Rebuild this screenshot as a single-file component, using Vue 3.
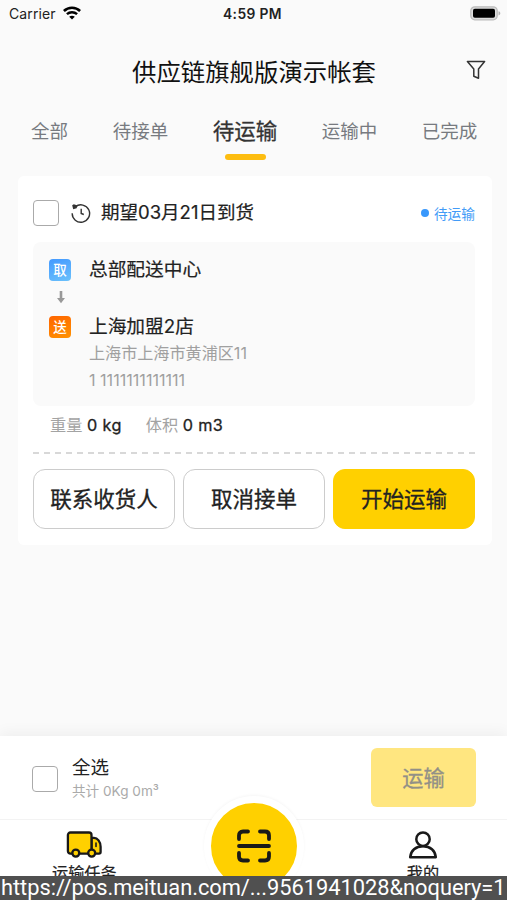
<script setup>
const tabs = [
  { name: '全部', width: 83 },
  { name: '待接单', width: 99 },
  { name: '待运输', width: 110, active: true },
  { name: '运输中', width: 99 },
  { name: '已完成', width: 101 }
]
</script>

<template>
  <div class="screen">
    <div class="status-bar">
      <div class="carrier">
        <span>Carrier</span>
        <svg width="18" height="14" viewBox="0 0 18 14" fill="none" stroke="#000">
          <path d="M.9 5C5.4.7 12.6.7 17.1 5" stroke-width="2.6" />
          <path d="M3.9 8.2c2.9-2.7 7.3-2.7 10.2 0" stroke-width="2.4" />
          <path d="M9 13.6 6.2 10.8c1.6-1.5 4-1.5 5.6 0z" fill="#000" stroke="none" />
        </svg>
      </div>
      <span class="time">4:59 PM</span>
      <svg class="battery" width="31" height="15" viewBox="0 0 31 15">
        <rect x=".8" y=".8" width="26.4" height="13" rx="4" fill="#ddd" stroke="#bcbcbc" stroke-width="1.3" />
        <rect x="3" y="2.8" width="22" height="9" rx="1.8" fill="#000" />
        <path d="M28.5 5.2c2.4.6 2.4 3.6 0 4.2z" fill="#b4b4b4" />
      </svg>
    </div>

    <header class="header">
      <h1>供应链旗舰版演示帐套</h1>
      <svg class="filter" width="20" height="20" viewBox="0 0 20 20" fill="none" stroke="#333" stroke-width="1.5" stroke-linejoin="round">
        <path d="M1.4 1.5h17.2l-6.1 7.4v9.3l-4.7-2V8.9z" />
      </svg>
    </header>

    <nav class="tabs">
      <div v-for="tab in tabs" :key="tab.name" class="tab" :class="{ active: tab.active }" :style="{ width: tab.width + 'px' }">
        <span>{{ tab.name }}</span>
      </div>
    </nav>

    <main class="card">
      <div class="card-head">
        <i class="checkbox"></i>
        <svg class="clock" width="20" height="20" viewBox="0 0 20 20" fill="none" stroke="#333" stroke-width="1.4">
          <path d="M4.4 3.8A8.7 8.7 0 1 1 1.2 10.2" />
          <path d="M10.2 5.8v4.700l2.6 1" />
          <path d="M1.2 2.2 2.8 1.2 6.6 2.6 5.6 5.2 2.2 6.2z" fill="#333" stroke="none" />
        </svg>
        <strong>期望03月21日到货</strong>
        <span class="state"><i></i>待运输</span>
      </div>

      <section class="route">
        <div class="stop">
          <b class="badge pick">取</b>
          <strong>总部配送中心</strong>
        </div>
        <svg class="arrow" width="10" height="13" viewBox="0 0 10 13" fill="#999">
          <path d="M3.700 0h2.600v7H9L5 12.300 1 7h2.700z" />
        </svg>
        <div class="stop">
          <b class="badge send">送</b>
          <strong>上海加盟2店</strong>
        </div>
        <p>上海市上海市黄浦区11</p>
        <p class="phone">1 1111111111111</p>
      </section>

      <div class="metrics">
        <span>重量 <b>0 kg</b></span>
        <span>体积 <b>0 m3</b></span>
      </div>
      <div class="divider"></div>
      <div class="actions">
        <button>联系收货人</button>
        <button>取消接单</button>
        <button class="primary">开始运输</button>
      </div>
    </main>

    <div class="batch">
      <i class="checkbox"></i>
      <div class="summary">
        <span class="all">全选</span>
        <span class="total">共计 0Kg 0m³</span>
      </div>
      <button>运输</button>
    </div>

    <footer class="nav">
      <div class="nav-item task">
        <svg width="36" height="28" viewBox="0 0 36 28" fill="#ffd000" stroke="#191919" stroke-width="2.3" stroke-linejoin="round">
          <path d="M25.500 6.800h2.500c3.400 0 6.600 4 6.600 9v5.200q0 1.600-1.600 1.600h-7.500z" />
          <rect x="1.900" y="1.500" width="23.600" height="21.100" rx="2.500" />
          <path d="M30 12v3.500" fill="none" stroke-width="1.600" stroke-linecap="round" />
          <circle cx="9.800" cy="22.100" r="3.500" />
          <circle cx="25.700" cy="22.100" r="3.500" />
        </svg>
        <span>运输任务</span>
      </div>
      <div class="nav-item mine">
        <svg width="30" height="28" viewBox="0 0 30 28" fill="none" stroke="#191919" stroke-width="2.5" stroke-linejoin="round">
          <circle cx="15" cy="8.2" r="6.7" />
          <path d="M2.2 26.2c.5-6.700 5.500-11 12.800-11s12.300 4.300 12.800 11z" />
        </svg>
        <span>我的</span>
      </div>
      <div class="scan">
        <svg width="36" height="34" viewBox="0 0 36 34" fill="none" stroke="#191919" stroke-width="3.800" stroke-linecap="round">
          <path d="M3 10V6.500Q3 2.500 7 2.500h5M24 2.500h5q4 0 4 4V10M3 24v3.500q0 4 4 4h5M24 31.500h5q4 0 4-4V24M3 17h30" />
        </svg>
      </div>
    </footer>

    <div class="url"><span>https://pos.meituan.com/...9561941028&amp;noquery=1</span></div>
  </div>
</template>

<style>
body { margin: 0; }
</style>

<style scoped>
* { box-sizing: border-box; }
.screen {
  width: 507px;
  height: 900px;
  display: flex;
  flex-direction: column;
  overflow: hidden;
  background: #fafafa;
  color: #222;
  font-family: Inter, "Noto Sans CJK SC", sans-serif;
}
i { display: block; }
button { font-family: inherit; padding: 0; margin: 0; border: 0; }
strong { font-weight: 400; -webkit-text-stroke: .2px currentColor; }
.status-bar {
  height: 28px;
  flex: none;
  display: grid;
  grid-template-columns: 1fr auto 1fr;
  align-items: center;
  padding: 0 6px 0 9px;
  color: #222;
}
.carrier { display: flex; align-items: center; gap: 7px; font-size: 14px; letter-spacing: .1px; margin-top: -1px; }
.carrier svg { margin-top: -2px; }
.time { width: 64px; font-size: 13.8px; font-weight: 600; letter-spacing: .4px; white-space: nowrap; }
.battery { justify-self: end; margin-top: -2px; }
.header {
  height: 86px;
  flex: none;
  display: grid;
  grid-template-columns: 1fr auto 1fr;
  align-items: center;
  padding: 0 21px 0 22px;
}
.header h1 { grid-column: 2; margin: 2px 0 0; font-size: 24.4px; line-height: 36px; font-weight: 400; color: #111; }
.filter { justify-self: end; margin-top: -2px; }
.tabs { height: 62px; flex: none; display: flex; padding-left: 8px; }
.tab {
  display: flex;
  flex-direction: column;
  align-items: center;
  font-size: 18.5px;
  line-height: 35px;
  color: #777a80;
}
.tab.active { font-size: 21.5px; color: #333; -webkit-text-stroke: .3px currentColor; }
.tab.active::after { content: ""; width: 41px; height: 6px; margin-top: 5px; border-radius: 3px; background: #fdbd10; }
.card {
  width: 474px;
  height: 369px;
  flex: none;
  margin-left: 18px;
  padding: 0 17px 0 15px;
  border-radius: 6px;
  background: #fff;
}
.card-head { display: flex; align-items: center; height: 66px; padding-top: 7px; }
.checkbox { width: 26px; height: 26px; flex: none; border: 1.5px solid #aaa; border-radius: 4px; background: #fff; }
.clock { margin: 0 10px 0 12px; }
.card-head strong { font-size: 18.5px; line-height: 26px; margin-top: -1px; }
.state { display: flex; align-items: center; gap: 5px; margin-left: auto; font-size: 13.7px; color: #429bf7; }
.state i { width: 8px; height: 8px; border-radius: 50%; background: #3898fc; }
.route { height: 164px; padding: 17px 16px 0; border-radius: 8px; background: #fafafa; }
.stop { display: flex; align-items: center; gap: 18px; height: 22px; }
.stop strong { font-size: 18.7px; line-height: 24px; }
.badge {
  width: 22px;
  height: 22px;
  border-radius: 4px;
  color: #fff;
  font-size: 13.5px;
  line-height: 22px;
  font-weight: 500;
  text-align: center;
}
.pick { background: linear-gradient(160deg, #4399ff, #6bc1fb); }
.send { background: linear-gradient(160deg, #ff6500, #ff9200); }
.arrow { display: block; margin: 10px 0 12px 7px; }
.route p { margin: 1px 0 0 40px; font-size: 16.1px; line-height: 26px; color: #a0a0a0; }
.stop + p { margin-top: 2px; }
.metrics { display: flex; gap: 24px; height: 46px; padding-left: 17px; font-size: 16.2px; line-height: 39px; color: #a3a3a3; }
.metrics b { font-weight: 400; -webkit-text-stroke: .3px currentColor; letter-spacing: .4px; color: #222; }
.divider { height: 2px; background: repeating-linear-gradient(90deg, #d8d8d8 0 6px, transparent 6px 10.9px); }
.actions { display: flex; gap: 8px; margin-top: 15px; }
.actions button {
  flex: 1;
  height: 60px;
  border: 1px solid #ccc;
  border-radius: 12px;
  background: #fff;
  color: #222;
  font-size: 21.5px;
  line-height: 32px;
  -webkit-text-stroke: .3px currentColor;
}
.actions .primary { border-color: #ffd000; background: #ffd000; }
.batch {
  display: flex;
  align-items: center;
  height: 83px;
  flex: none;
  margin-top: auto;
  padding: 0 31px 0 32px;
  background: #fff;
  box-shadow: 0 -3px 14px rgba(0, 0, 0, .05);
}
.batch .checkbox { margin-top: 3px; }
.summary { display: flex; flex-direction: column; margin-left: 14px; }
.all { font-size: 18.5px; line-height: 26px; }
.total { font-size: 13.6px; line-height: 22px; color: #aaa; }
.batch button {
  width: 105px;
  height: 59px;
  margin-left: auto;
  padding-bottom: 2px;
  border-radius: 6px;
  background: #ffe680;
  color: #929087;
  font-size: 21.2px;
  -webkit-text-stroke: .3px currentColor;
}
.nav { position: relative; display: flex; justify-content: space-between; height: 57px; flex: none; padding: 11px 52px 0; border-top: 1px solid #f3f3f3; background: #fff; }
.nav-item { display: flex; flex-direction: column; align-items: center; height: 45px; overflow: hidden; font-size: 16.2px; line-height: 28px; -webkit-text-stroke: .2px currentColor; }
.nav-item svg { flex: none; }
.mine { width: 64px; }
.scan {
  position: absolute;
  left: 204px;
  top: -24px;
  width: 100px;
  height: 100px;
  display: flex;
  align-items: center;
  justify-content: center;
  border: 7px solid #fff;
  border-radius: 50%;
  background: #ffd000;
  box-shadow: 0 -1px 3px rgba(0, 0, 0, .04);
}
.scan svg { margin: -1px 1px 0 0; }
.url { position: relative; z-index: 1; height: 24px; flex: none; padding-left: 1px; background: #505050; color: #fff; font-family: Roboto, sans-serif; font-size: 21.85px; letter-spacing: -.03px; line-height: 24px; white-space: nowrap; }
</style>
